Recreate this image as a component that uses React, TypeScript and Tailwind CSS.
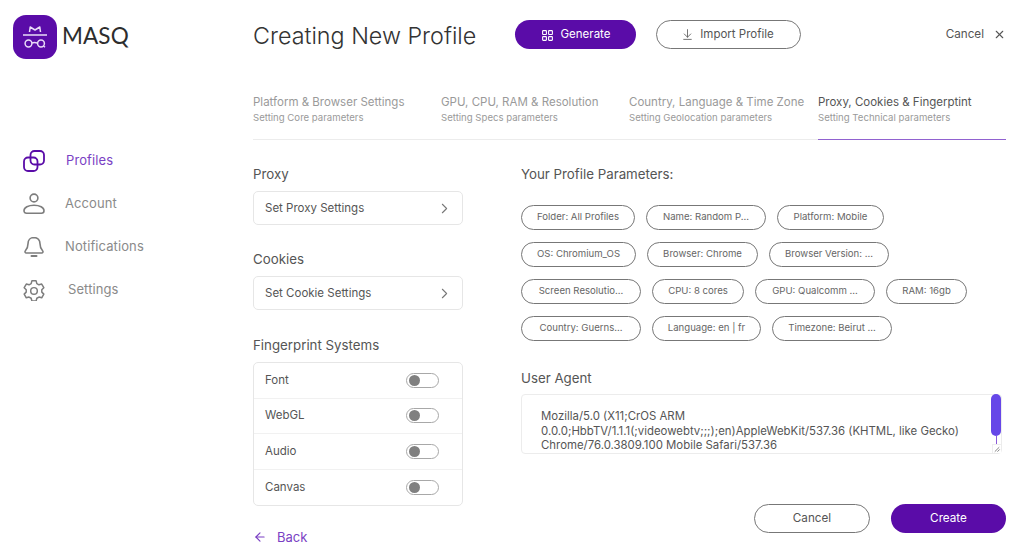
import { ChevronRight, X, ArrowLeft, LayoutGrid, ArrowDownToLine } from 'lucide-react';

const tabs = [
  { title: 'Platform & Browser Settings', sub: 'Setting Core parameters', width: 'w-[188px]' },
  { title: 'GPU, CPU, RAM & Resolution', sub: 'Setting Specs parameters', width: 'w-[188px]' },
  { title: 'Country, Language & Time Zone', sub: 'Setting Geolocation parameters', width: 'w-[189px]' },
];

const chipRows = [
  [
    { label: 'Folder: All Profiles', width: 'w-[114px]' },
    { label: 'Name: Random P...', width: 'w-[120px]' },
    { label: 'Platform: Mobile', width: 'w-[107px]' },
  ],
  [
    { label: 'OS: Chromium_OS', width: 'w-[115px]' },
    { label: 'Browser: Chrome', width: 'w-[111px]' },
    { label: 'Browser Version: ...', width: 'w-[120px]' },
  ],
  [
    { label: 'Screen Resolutio...', width: 'w-[120px]' },
    { label: 'CPU: 8 cores', width: 'w-[92px]' },
    { label: 'GPU: Qualcomm ...', width: 'w-[120px]' },
    { label: 'RAM: 16gb', width: 'w-[81px]' },
  ],
  [
    { label: 'Country: Guerns...', width: 'w-[120px]' },
    { label: 'Language: en | fr', width: 'w-[109px]' },
    { label: 'Timezone: Beirut ...', width: 'w-[120px]' },
  ],
];

function LogoMark() {
  return (
    <div className="flex h-11 w-11 items-center justify-center rounded-[13px] bg-[#5a0ca8]">
      <svg viewBox="0 0 44 44" className="h-11 w-11" fill="none" stroke="#e9dcf7" strokeWidth="1.5">
        <path d="M16.500 17l.7-5 4.800 3 4.800-3 .7 5" strokeLinejoin="round" />
        <path d="M10 20h24" />
        <circle cx="15.500" cy="28.500" r="3.400" />
        <circle cx="28" cy="28.500" r="3.400" />
        <path d="M19 28c1.500-.8 3-.8 5.500 0M30.500 31l1.500 1.300" />
      </svg>
    </div>
  );
}

function ProfilesIcon() {
  return (
    <svg viewBox="0 0 22 22" className="h-[22px] w-[22px]" fill="none" stroke="#5a0ca8" strokeWidth="1.8">
      <rect x="1" y="7.500" width="13.500" height="13.500" rx="4" />
      <rect x="7.500" y="1" width="13.500" height="13.500" rx="4" />
    </svg>
  );
}

function AccountIcon() {
  return (
    <svg viewBox="0 0 22 22" className="h-[22px] w-[22px]" fill="none" stroke="#7d7d7d" strokeWidth="1.6">
      <circle cx="11" cy="5" r="3.900" />
      <path d="M1 17.800c0-3.300 4.300-5.600 10-5.600s10 2.300 10 5.600c0 1.600-1 2.400-2.600 2.400H3.600C2 20.200 1 19.400 1 17.800z" />
    </svg>
  );
}

function BellIcon() {
  return (
    <svg viewBox="0 0 22 22" className="h-[22px] w-[22px]" fill="none" stroke="#7d7d7d" strokeWidth="1.6">
      <path d="M11 1.500c-3.800 0-6 2.800-6 6.200 0 4.200-1 5.300-2.600 7-.9 1-.3 2.300 1 2.300h15.200c1.300 0 1.900-1.300 1-2.300-1.600-1.700-2.600-2.800-2.600-7 0-3.400-2.200-6.200-6-6.200z" strokeLinejoin="round" />
      <path d="M8.500 20h5" strokeWidth="2" strokeLinecap="round" />
    </svg>
  );
}

function GearIcon() {
  return (
    <svg viewBox="0 0 24 24" className="h-[22px] w-[22px]" fill="none" stroke="#7d7d7d" strokeWidth="1.600" strokeLinejoin="round">
      <path d="M9.700 2h4.600l.8 3 2.300 1.300 3-.8 2.300 4-2.200 2.200v2.600l2.200 2.200-2.300 4-3-.8-2.300 1.300-.8 3H9.700l-.8-3-2.300-1.300-3 .8-2.300-4 2.200-2.200v-2.600L1.300 9.500l2.300-4 3 .8 2.300-1.300z" />
      <circle cx="12" cy="13" r="3.600" />
    </svg>
  );
}

function NavItem({ icon, label, active, textClass }: { icon: React.ReactNode; label: string; active?: boolean; textClass: string }) {
  return (
    <div className="flex h-[43px] items-center pl-[23px]">
      {icon}
      <span className={`${textClass} text-[13px] tracking-[0.1px] ${active ? 'text-[#7a3fc4]' : 'text-[#8a8a8a]'}`}>{label}</span>
    </div>
  );
}

function Toggle() {
  return (
    <div className="flex h-[15px] w-[33px] items-center rounded-full border border-[#a8a8a8] pl-[2px]">
      <div className="h-[11px] w-[11px] rounded-full bg-[#808080]" />
    </div>
  );
}

function SelectBox({ label }: { label: string }) {
  return (
    <div className="flex h-[34px] w-[210px] items-center justify-between rounded-[5px] border border-[#e6e6e6] pl-[11px] pr-[9px] text-[11.500px] text-[#555]">
      <span className="pt-[2px]">{label}</span>
      <ChevronRight className="h-[17px] w-[17px] text-[#777]" strokeWidth={1.500} />
    </div>
  );
}

export default function App() {
  return (
    <div className="flex h-[550px] w-[1024px] overflow-hidden bg-white font-['Inter',sans-serif]">
      {/* 侧边栏 */}
      <aside className="w-[253px] shrink-0 pt-[15px]">
        <div className="flex items-center pl-[13px]">
          <LogoMark />
          <span className="mb-[2px] ml-[5px] font-['Lato',sans-serif] text-[22.500px] leading-none tracking-[0.1px] text-[#2d2d2d]">MASQ</span>
        </div>
        <nav className="mt-[80px]">
          <NavItem icon={<ProfilesIcon />} label="Profiles" active textClass="ml-[21px]" />
          <NavItem icon={<AccountIcon />} label="Account" textClass="ml-[20px]" />
          <NavItem icon={<BellIcon />} label="Notifications" textClass="ml-[20px]" />
          <NavItem icon={<GearIcon />} label="Settings" textClass="ml-[23px]" />
        </nav>
      </aside>

      {/* 主内容 */}
      <main className="w-[753px] shrink-0">
        {/* 头部 */}
        <header className="mt-[20px] flex h-[29px] items-center">
          <h1 className="w-[262px] pt-[3px] text-[23.300px] font-light leading-none text-[#333]">Creating New Profile</h1>
          <button className="flex h-[29px] w-[121px] items-center justify-center gap-[7px] rounded-full bg-[#5a0ca8] pt-px text-[11.500px] text-white">
            <LayoutGrid className="h-[13px] w-[13px]" strokeWidth={2} />
            Generate
          </button>
          <button className="ml-5 flex h-[29px] w-[145px] items-center justify-center gap-[6px] rounded-full border border-[#777] pr-[2px] text-[11.500px] text-[#555]">
            <ArrowDownToLine className="h-[13px] w-[13px]" strokeWidth={1.500} />
            Import Profile
          </button>
          <div className="ml-auto flex items-center gap-[9px] pt-px text-[11.700px] text-[#555]">
            Cancel
            <X className="h-[13px] w-[13px]" strokeWidth={2} />
          </div>
        </header>

        {/* 步骤标签 */}
        <div className="mt-[45px] flex h-[46px] border-b border-[#ececec]">
          {tabs.map((tab) => (
            <div key={tab.title} className={tab.width}>
              <div className="text-[11.500px] leading-[16px] text-[#9a9a9a]">{tab.title}</div>
              <div className="mt-[1px] text-[9.600px] leading-[14px] text-[#9a9a9a]">{tab.sub}</div>
            </div>
          ))}
          <div className="h-[46px] flex-1 border-b border-[#9162d0]">
            <div className="text-[11.500px] leading-[16px] text-[#555]">Proxy, Cookies &amp; Fingerptint</div>
            <div className="mt-[1px] text-[9.600px] leading-[14px] text-[#9a9a9a]">Setting Technical parameters</div>
          </div>
        </div>

        <div className="flex pt-[25px]">
          {/* 左列 */}
          <section className="w-[268px] shrink-0">
            <h2 className="text-[13.300px] leading-[18px] text-[#555]">Proxy</h2>
            <div className="mt-[8px]">
              <SelectBox label="Set Proxy Settings" />
            </div>
            <h2 className="mt-[25px] text-[13.300px] leading-[18px] text-[#555]">Cookies</h2>
            <div className="mt-[8px]">
              <SelectBox label="Set Cookie Settings" />
            </div>
            <h2 className="mt-[26px] text-[13.300px] leading-[18px] text-[#555]">Fingerprint Systems</h2>
            <div className="mt-[8px] w-[210px] divide-y divide-[#f1f1f1] rounded-[5px] border border-[#e6e6e6]">
              {['Font', 'WebGL', 'Audio', 'Canvas'].map((name) => (
                <div key={name} className="flex h-[35.500px] items-center justify-between pl-[11px] pr-[23px] text-[11.500px] text-[#555]">
                  <span>{name}</span>
                  <Toggle />
                </div>
              ))}
            </div>
            <div className="mt-[23px] flex items-center gap-[10px] text-[13px] leading-4 text-[#7a3fc4]">
              <ArrowLeft className="h-[14px] w-[14px]" strokeWidth={2} />
              Back
            </div>
          </section>

          {/* 右列 */}
          <section className="flex-1">
            <h2 className="text-[13.300px] leading-[18px] text-[#555]">Your Profile Parameters:</h2>
            <div className="mt-[22px] flex flex-col gap-[12px]">
              {chipRows.map((row, i) => (
                <div key={i} className="flex gap-[11px]">
                  {row.map((chip) => (
                    <span key={chip.label} className={`flex h-[25px] ${chip.width} items-center justify-center whitespace-nowrap rounded-full border border-[#777] text-[9.600px] text-[#666]`}>
                      {chip.label}
                    </span>
                  ))}
                </div>
              ))}
            </div>
            <h2 className="mt-[28px] text-[13.300px] leading-[18px] text-[#555]">User Agent</h2>
            <div className="relative mt-[7px] h-[60px] w-[481px] rounded-[4px] border border-[#ececec] pl-[19px] pt-[14px] text-[11.400px] leading-[14.500px] text-[#555]">
              Mozilla/5.0 (X11;CrOS ARM
              <br />
              0.0.0;HbbTV/1.1.1(;videowebtv;;;);en)AppleWebKit/537.36 (KHTML, like Gecko)
              <br />
              Chrome/76.0.3809.100 Mobile Safari/537.36
              {/* 滚动条 */}
              <div className="absolute right-[0px] top-[-1px] h-[42px] w-[10px] rounded-full bg-[#6647e8]" />
              <div className="absolute right-[4px] top-[41px] h-[9px] w-[1px] bg-[#8a5ad8]" />
              <div className="absolute bottom-[0px] right-[0px] h-[9px] w-[9px] border-l border-t border-[#eee] bg-white">
                <svg viewBox="0 0 9 9" className="h-[8px] w-[8px]" stroke="#777" strokeWidth="1">
                  <path d="M2 7.500l5-5M5 7.500l2.500-2.500" />
                </svg>
              </div>
            </div>
            <div className="mt-[50px] flex w-[485px] justify-end gap-[21px] text-[11.700px]">
              <button className="h-[29px] w-[116px] rounded-full border border-[#777] text-[#555]">Cancel</button>
              <button className="h-[29px] w-[115px] rounded-full bg-[#5a0ca8] text-white">Create</button>
            </div>
          </section>
        </div>
      </main>
    </div>
  );
}
